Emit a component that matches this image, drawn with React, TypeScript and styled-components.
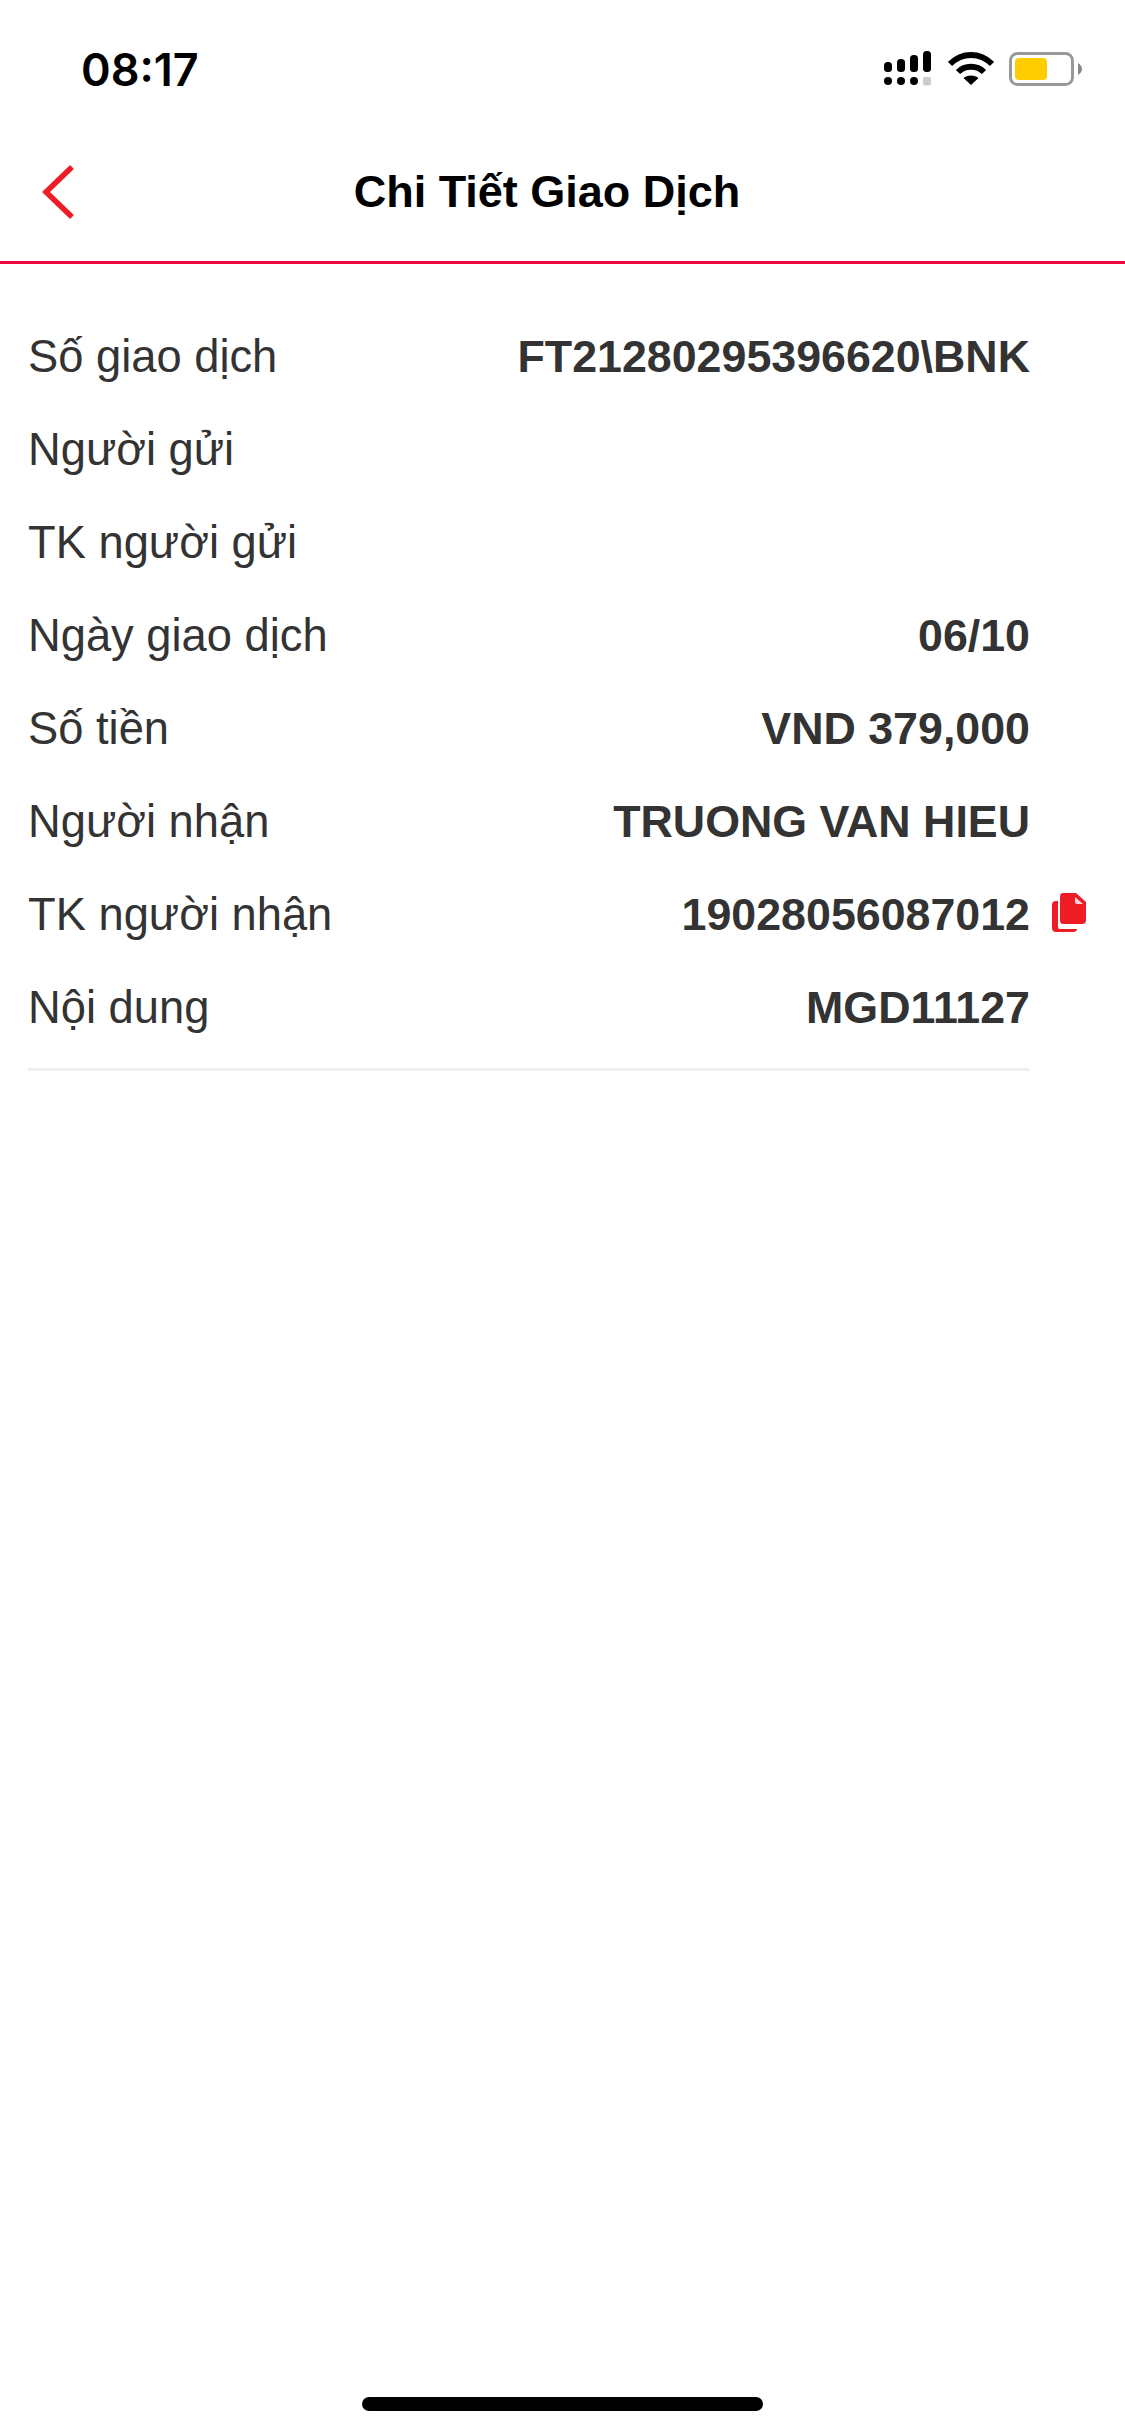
import React from "react";
import styled, { createGlobalStyle } from "styled-components";

const Global = createGlobalStyle`
  html, body { margin: 0; padding: 0; background: #fff; }
  * { box-sizing: border-box; }
`;

const Screen = styled.div`
  width: 1125px;
  height: 2436px;
  display: flex;
  flex-direction: column;
  background: #fff;
  font-family: "Liberation Sans", Arial, sans-serif;
`;

const StatusBar = styled.div`
  height: 132px;
  padding: 6px 43px 0 81px;
  display: flex;
  align-items: center;
  justify-content: space-between;
`;

const Time = styled.span`
  font-family: Inter, "Liberation Sans", sans-serif;
  font-size: 45px;
  font-weight: 600;
  color: #000;
`;

const StatusIcons = styled.div`
  display: flex;
  align-items: center;
  gap: 15px;
`;

const NavBar = styled.div`
  height: 132px;
  padding: 0 0 9px 42px;
  display: flex;
  align-items: center;
  position: relative;
  border-bottom: 3px solid #f0043f;
`;

const Title = styled.h1`
  position: absolute;
  left: 0;
  right: 31px;
  margin: 0;
  text-align: center;
  font-size: 45px;
  font-weight: 700;
  color: #000;
`;

const Details = styled.div`
  margin: 46px 0 0 28px;
  width: 1002px;
  padding-bottom: 14px;
  border-bottom: 3px solid #efefef;
`;

const Row = styled.div`
  height: 93px;
  display: flex;
  align-items: center;
  justify-content: space-between;
  color: #333;
  position: relative;
`;

const Label = styled.span`
  font-size: 45.3px;
  font-weight: 400;
`;

const Value = styled.span`
  font-size: 44.75px;
  font-weight: 700;
`;

const CopyIcon = styled.svg`
  position: absolute;
  left: 1024px;
  top: 25px;
`;

const Spacer = styled.div`
  flex: 1;
`;

const HomeBar = styled.div`
  align-self: center;
  width: 401px;
  height: 14px;
  margin-bottom: 25px;
  border-radius: 7px;
  background: #000;
`;

const rows: [string, string][] = [
  ["Số giao dịch", "FT21280295396620\\BNK"],
  ["Người gửi", ""],
  ["TK người gửi", ""],
  ["Ngày giao dịch", "06/10"],
  ["Số tiền", "VND 379,000"],
  ["Người nhận", "TRUONG VAN HIEU"],
  ["TK người nhận", "19028056087012"],
  ["Nội dung", "MGD11127"],
];

const Signal = () => (
  <svg width="49" height="36" viewBox="0 0 49 36" fill="#000">
    <rect x="0" y="11" width="8" height="10" rx="3.5" />
    <rect x="13" y="8" width="8" height="13" rx="3.5" />
    <rect x="26" y="4" width="8" height="17" rx="3.5" />
    <rect x="39" y="0" width="8" height="21" rx="3.5" />
    <circle cx="4" cy="30" r="4" />
    <circle cx="17" cy="30" r="4" />
    <circle cx="30" cy="30" r="4" />
    <rect x="39" y="26" width="8" height="8.5" rx="2" fill="#ccc" />
  </svg>
);

const Wifi = () => (
  <svg width="46" height="34" viewBox="0 0 46 34" fill="none" stroke="#000" strokeWidth="6">
    <path d="M2 12 C14 0 32 0 44 12" />
    <path d="M10 20 C17 13 29 13 36 20" />
    <path d="M23 33 L15.5 26 C19 22.5 27 22.5 30.5 26 Z" fill="#000" stroke="none" />
  </svg>
);

const Battery = () => (
  <svg width="73" height="34" viewBox="0 0 73 34">
    <rect x="1.5" y="1.5" width="62" height="31" rx="7" fill="none" stroke="#999" strokeWidth="3" />
    <rect x="6" y="6" width="32" height="22" rx="4" fill="#fc0" />
    <path d="M69 11 C72 13 73 15 73 17 C73 19 72 21 69 23 Z" fill="#888" />
  </svg>
);

export default function App() {
  return (
    <Screen>
      <Global />
      <StatusBar>
        <Time>08:17</Time>
        <StatusIcons>
          <Signal />
          <Wifi />
          <Battery />
        </StatusIcons>
      </StatusBar>
      <NavBar>
        <svg width="34" height="56" viewBox="0 0 34 56" fill="none" stroke="#ee1c25" strokeWidth="5.5">
          <path d="M30 3 L4 28 L30 53" />
        </svg>
        <Title>Chi Tiết Giao Dịch</Title>
      </NavBar>
      <Details>
        {rows.map(([label, value]) => (
          <Row key={label}>
            <Label>{label}</Label>
            <Value>{value}</Value>
            {label === "TK người nhận" && (
              <CopyIcon width="35" height="39" viewBox="0 0 35 39">
                <path d="M6 8 H4 Q0 8 0 12 V35 Q0 39 4 39 H21 Q25 39 25 36 H8 Q6 36 6 34 Z" fill="#ee1c25" />
                <path d="M11 0 H24 L34 9 V27 Q34 31 30 31 H11 Q8 31 8 27 V4 Q8 0 11 0 Z" fill="#ee1c25" />
                <path d="M23 4 L31 11 H25 Q23 11 23 9 Z" fill="#f6d5d6" />
              </CopyIcon>
            )}
          </Row>
        ))}
      </Details>
      <Spacer />
      <HomeBar />
    </Screen>
  );
}
